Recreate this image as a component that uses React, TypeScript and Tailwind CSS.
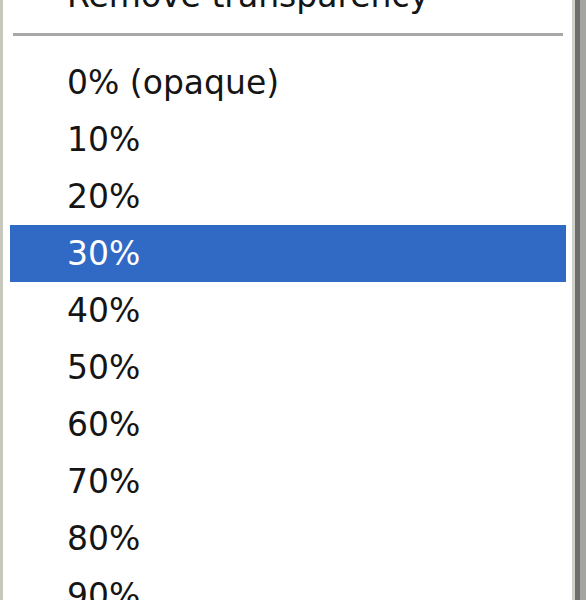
import React from "react";

const items = ["0% (opaque)", "10%", "20%", "30%", "40%", "50%", "60%", "70%", "80%", "90%"];

export default function App() {
  return (
    <div className="w-[586px] h-[600px] overflow-hidden flex bg-white" style={{ fontFamily: '"DejaVu Sans", Tahoma, sans-serif' }}>
      <div className="w-[3px] bg-[#c8c8bc]" />
      <div className="flex-1 flex flex-col bg-white pl-[7px] pr-[6px]">
        <div className="mt-[-33px] h-[57px] shrink-0 flex items-center pl-[57px] text-[33px] text-[#151515] whitespace-nowrap">
          Remove transparency
        </div>
        <div className="h-[30px] shrink-0 pt-[9px] px-[3px]">
          <div className="h-[3px] w-full bg-[#a8a8a8]" />
        </div>
        {items.map((t) => (
          <div
            key={t}
            className={
              t === "30%"
                ? "h-[57px] shrink-0 flex items-center pl-[57px] text-[33px] bg-[#316ac5] text-white whitespace-nowrap"
                : "h-[57px] shrink-0 flex items-center pl-[57px] text-[33px] text-[#151515] whitespace-nowrap"
            }
          >
            {t}
          </div>
        ))}
      </div>
      <div className="w-[3px] bg-[#d0d0c8]" />
      <div className="w-[5px] bg-[#6e6e6e]" />
      <div className="w-[6px] bg-[#a4a4a0]" />
    </div>
  );
}
